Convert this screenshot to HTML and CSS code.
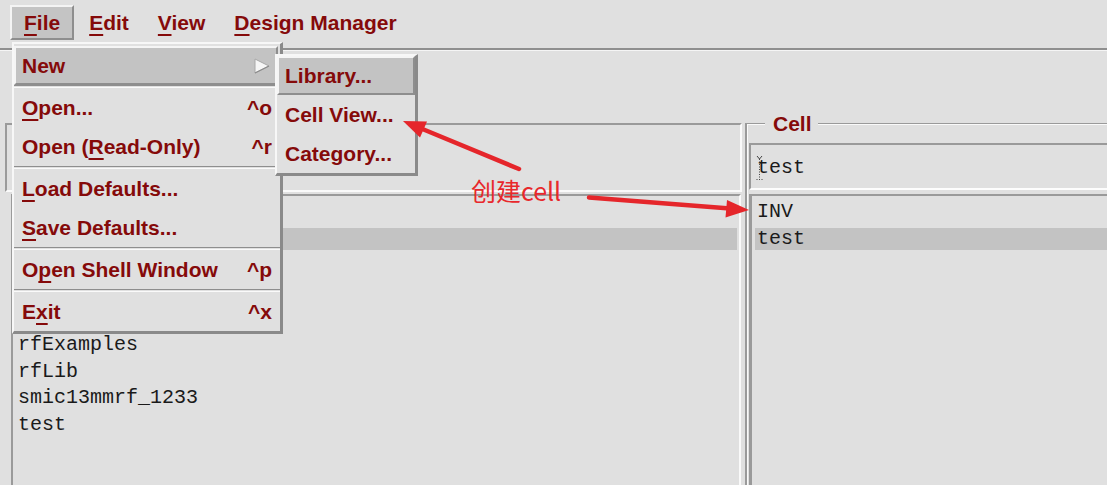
FILE: index.html
```html
<!DOCTYPE html>
<html lang="en">
<head>
<meta charset="utf-8">
<title>Library Manager</title>
<link rel="stylesheet" href="styles.css">
</head>
<body>
<div class="app">
  <nav class="menubar">
    <span class="mb-item active"><u>F</u>ile</span>
    <span class="mb-item"><u>E</u>dit</span>
    <span class="mb-item"><u>V</u>iew</span>
    <span class="mb-item"><u>D</u>esign Manager</span>
  </nav>
  <div class="rule"></div>
  <main class="workspace">
    <section class="pane lib">
      <div class="lib-field"></div>
      <ul class="list lib-list">
        <li></li>
        <li class="sel"></li>
        <li></li>
        <li></li>
        <li></li>
        <li>rfExamples</li>
        <li>rfLib</li>
        <li>smic13mmrf_1233</li>
        <li>test</li>
      </ul>
    </section>
    <section class="pane cell">
      <div class="frame-head"><span class="label">Cell</span></div>
      <div class="frame-body">
        <div class="field">
          <span class="cursor"><svg width="7" height="26" viewBox="0 0 7 26"><path d="M1 1 L3.5 4 L6 1" fill="none" stroke="#444" stroke-width="1"/><path d="M3.5 4 V24" stroke="#444" stroke-width="1" stroke-dasharray="1 1.5"/><path d="M0.5 24.5 H6.5" stroke="#444" stroke-width="1" stroke-dasharray="1 1.5"/></svg></span>test
        </div>
        <ul class="list cell-list">
          <li>INV</li>
          <li class="sel">test</li>
        </ul>
      </div>
    </section>
  </main>
</div>

<div class="menu file-menu">
  <div class="mi hl"><span>New</span><svg class="sub-arrow" width="16" height="16" viewBox="0 0 16 16"><polygon points="1,1 15,8 1,15" fill="#f6f6f6" stroke="#a8a8a8" stroke-width="1"/><polyline points="1,15 15,8" fill="none" stroke="#8c8c8c" stroke-width="1.2"/></svg></div>
  <div class="sep"></div>
  <div class="mi"><span><u>O</u>pen...</span><span>^o</span></div>
  <div class="mi"><span>Open (<u>R</u>ead-Only)</span><span>^r</span></div>
  <div class="sep"></div>
  <div class="mi"><span><u>L</u>oad Defaults...</span></div>
  <div class="mi"><span><u>S</u>ave Defaults...</span></div>
  <div class="sep"></div>
  <div class="mi"><span>O<u>p</u>en Shell Window</span><span>^p</span></div>
  <div class="sep"></div>
  <div class="mi"><span>E<u>x</u>it</span><span>^x</span></div>
</div>

<div class="menu submenu">
  <div class="mi hl"><span>Library...</span></div>
  <div class="mi"><span>Cell View...</span></div>
  <div class="mi"><span>Category...</span></div>
</div>

<svg class="annot" width="1107" height="485" viewBox="0 0 1107 485">
  <line x1="519" y1="169" x2="420" y2="128" stroke="#e5262b" stroke-width="4.5" stroke-linecap="round"/>
  <polygon points="403,121 427,121.5 420,137.5" fill="#e5262b"/>
  <line x1="589" y1="197.5" x2="730" y2="208.5" stroke="#e5262b" stroke-width="4.5" stroke-linecap="round"/>
  <polygon points="749,210 725.5,217.5 727,200" fill="#e5262b"/>
</svg>
<div class="note">创建cell</div>
</body>
</html>
```

FILE: styles.css
```css
html, body {
  margin: 0;
  padding: 0;
}

body {
  width: 1107px;
  height: 485px;
  overflow: hidden;
  position: relative;
  background: #e0e0e0;
  font-family: "Liberation Sans", Arial, sans-serif;
}

.app {
  display: flex;
  flex-direction: column;
  height: 485px;
}

/* ---------- menubar ---------- */
.menubar {
  height: 48px;
  box-sizing: border-box;
  padding: 5px 0 0 10px;
  display: flex;
  align-items: flex-start;
  gap: 1px;
}

.mb-item {
  height: 35px;
  box-sizing: border-box;
  padding: 0 12px;
  border: 2px solid transparent;
  font-weight: bold;
  font-size: 21px;
  line-height: 31px;
  color: #850a0a;
  white-space: nowrap;
}

.mb-item.active {
  background: #c4c4c4;
  border-color: #f4f4f4 #8e8e8e #8e8e8e #f4f4f4;
}

u {
  text-decoration: underline;
  text-decoration-thickness: 2px;
  text-underline-offset: 4px;
  text-decoration-skip-ink: none;
}

.rule {
  height: 3px;
  box-sizing: border-box;
  border-top: 2px solid #8f8f8f;
  border-bottom: 1px solid #f5f5f5;
}

/* ---------- workspace ---------- */
.workspace {
  flex: 1;
  display: grid;
  grid-template-columns: 745px 1fr;
  padding-top: 61px;
  overflow: hidden;
}

.pane {
  display: flex;
  flex-direction: column;
  min-height: 0;
}

.pane.lib {
  padding: 11px 0 0 5px;
}

.lib-field {
  height: 69px;
  box-sizing: border-box;
  margin-right: 3px;
  border-style: solid;
  border-width: 2px;
  border-color: #9a9a9a #fafafa #fafafa #9a9a9a;
}

.list {
  list-style: none;
  margin: 0;
  padding: 1px 0 0 0;
  flex: 1;
  font-family: "Liberation Mono", "Courier New", monospace;
  font-size: 20px;
  color: #1a1a1a;
}

.list li {
  height: 26.6px;
  line-height: 30px;
  white-space: nowrap;
}

.list li.sel {
  background: linear-gradient(to bottom, transparent 4px, #c3c3c3 4px, #c3c3c3 26px, transparent 26px);
}

.lib-list {
  margin: 2px 4px 0 6px;
  border-top: 2px solid #9a9a9a;
  border-left: 2px solid #9a9a9a;
  border-right: 2px solid #fafafa;
}

.lib-list li {
  margin: 0 2px;
  padding-left: 3px;
}

/* ---------- cell frame ---------- */
.frame-head {
  display: flex;
  height: 22px;
  align-items: stretch;
}

.frame-head::before {
  content: "";
  width: 18px;
  margin-top: 11px;
  border-top: 1px solid #9a9a9a;
  border-left: 2px solid #9a9a9a;
  box-shadow: inset 1px 1px #fafafa;
}

.frame-head::after {
  content: "";
  flex: 1;
  margin-top: 11px;
  border-top: 1px solid #9a9a9a;
  box-shadow: inset 0 1px #fafafa;
}

.label {
  padding: 0 6px 0 8px;
  font-weight: bold;
  font-size: 21px;
  line-height: 24px;
  color: #850a0a;
}

.frame-body {
  flex: 1;
  display: flex;
  flex-direction: column;
  border-left: 2px solid #9a9a9a;
  box-shadow: inset 1px 0 #fafafa;
  min-height: 0;
}

.field {
  position: relative;
  height: 47px;
  box-sizing: border-box;
  margin: 9px 0 0 2px;
  padding-left: 6px;
  border-top: 2px solid #9a9a9a;
  border-left: 2px solid #9a9a9a;
  border-bottom: 2px solid #fdfdfd;
  font-family: "Liberation Mono", "Courier New", monospace;
  font-size: 20px;
  line-height: 45px;
  color: #1a1a1a;
}

.cursor {
  position: absolute;
  left: 5px;
  top: 10px;
  width: 7px;
  height: 26px;
  line-height: 0;
}

.cell-list {
  margin: 4px 0 0 2px;
  border-top: 2px solid #9a9a9a;
  border-left: 3px solid #9a9a9a;
}

.cell-list li {
  margin-left: 3px;
  padding-left: 2px;
}

/* ---------- drop-down menus ---------- */
.menu {
  position: absolute;
  box-sizing: border-box;
  background: #e0e0e0;
  border-style: solid;
  border-width: 2px 3px 3px 2px;
  border-color: #f7f7f7 #8a8a8a #8a8a8a #f7f7f7;
}

.file-menu {
  left: 12px;
  top: 42px;
  width: 271px;
  padding-top: 2px;
}

.submenu {
  left: 275px;
  top: 54px;
  width: 143px;
}

.mi {
  height: 39px;
  box-sizing: border-box;
  display: flex;
  align-items: center;
  justify-content: space-between;
  padding: 0 8px 0 8px;
  font-weight: bold;
  font-size: 21px;
  color: #850a0a;
  white-space: nowrap;
}

.mi.hl {
  background: #c3c3c3;
  border: 2px solid;
  border-color: #f5f5f5 #8e8e8e #8e8e8e #f5f5f5;
  padding: 0 6px 0 6px;
}

.file-menu .mi.hl {
  margin-right: 2px;
}

.sub-arrow {
  display: block;
}

.sep {
  height: 1px;
  border-top: 1px solid #8e8e8e;
  border-bottom: 1px solid #fafafa;
}

/* ---------- annotation ---------- */
.annot {
  position: absolute;
  left: 0;
  top: 0;
  pointer-events: none;
}

.note {
  position: absolute;
  left: 471px;
  top: 174px;
  font-family: "Noto Sans CJK SC", "Noto Sans", sans-serif;
  font-size: 25px;
  line-height: 32px;
  color: #e8282c;
  white-space: nowrap;
}
```
